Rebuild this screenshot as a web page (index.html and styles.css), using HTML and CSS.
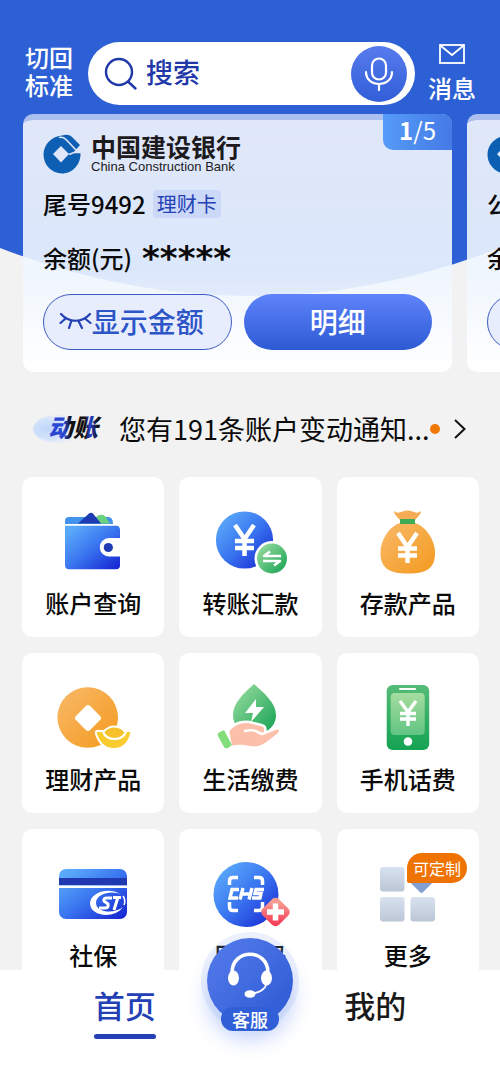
FILE: index.html
```html
<!DOCTYPE html>
<html lang="zh-CN">
<head>
    <meta charset="UTF-8">
    <meta name="viewport" content="width=device-width, initial-scale=1.0">
    <title>中国建设银行</title>
    <link rel="stylesheet" href="styles.css">
</head>
<body>
    <!-- shared gradients and symbols -->
    <svg class="defs" width="0" height="0" aria-hidden="true">
        <defs>
            <linearGradient id="blue" x1="0" y1="0" x2="1" y2="1">
                <stop offset="0.1" stop-color="#5aa9fa"/><stop offset="0.5" stop-color="#3a76f0"/><stop offset="1" stop-color="#1420d0"/>
            </linearGradient>
            <linearGradient id="green" x1="0" y1="0" x2="1" y2="1">
                <stop offset="0" stop-color="#a0e0a4"/><stop offset="1" stop-color="#12a050"/>
            </linearGradient>
            <linearGradient id="phone" x1="0" y1="0" x2="0" y2="1">
                <stop offset="0" stop-color="#55bb77"/><stop offset="1" stop-color="#14a352"/>
            </linearGradient>
            <linearGradient id="screen" x1="0" y1="0" x2="0" y2="1">
                <stop offset="0" stop-color="#a5dd9f"/><stop offset="1" stop-color="#62c482"/>
            </linearGradient>
            <linearGradient id="orange" x1="0" y1="0" x2="1" y2="1">
                <stop offset="0" stop-color="#f9b96a"/><stop offset="1" stop-color="#f39a1d"/>
            </linearGradient>
            <linearGradient id="red" x1="0" y1="0" x2="1" y2="1">
                <stop offset="0.2" stop-color="#f79c93"/><stop offset="0.8" stop-color="#f4455c"/>
            </linearGradient>
            <linearGradient id="grey" x1="0" y1="0" x2="0" y2="1">
                <stop offset="0" stop-color="#d8e1f0"/><stop offset="1" stop-color="#bcc6d6"/>
            </linearGradient>
            <radialGradient id="cloud" cx="0.3" cy="0.5" r="0.7">
                <stop offset="0" stop-color="#bdd8fb"/><stop offset="0.5" stop-color="#d3e3fa"/><stop offset="1" stop-color="#e8effa" stop-opacity="0"/>
            </radialGradient>
            <linearGradient id="ink" x1="0" y1="0" x2="1" y2="0">
                <stop offset="0" stop-color="#2a46d4"/><stop offset="0.3" stop-color="#2a46d4"/><stop offset="0.42" stop-color="#111"/><stop offset="0.68" stop-color="#111"/><stop offset="0.78" stop-color="#2a46d4"/><stop offset="0.92" stop-color="#111"/>
            </linearGradient>
            <symbol id="ccb" viewBox="0 0 38 40">
                <path fill="#0d5fb3" fill-rule="evenodd" d="M19 1.500C23 0 27 1 29 3L37 11L30 19H37.500C38 31 29 39.500 19 39.500C9 39.500 0.500 31 0.500 20.500C0.500 11 8 2.500 19 1.500Z M18 12L10 20L18 28.500L26 20Z"/>
                <path fill="none" stroke="#e0e8f9" stroke-width="1.600" d="M16 3.500Q20 2.500 23 5.500L33 16M26 20.500L31 18.500H38"/>
            </symbol>
        </defs>
    </svg>

    <main class="page">
        <header class="topbar">
            <a href="#" class="switch-mode">切回<br>标准</a>
            <form class="search">
                <label class="search-icon" for="search-input">
                    <svg width="34" height="34" viewBox="0 0 34 34" fill="none" stroke="#2038a8" stroke-width="2.4" stroke-linecap="round">
                        <circle cx="15" cy="15" r="13"/>
                        <path d="M24.5 25L31.500 31.500"/>
                    </svg>
                </label>
                <input type="text" id="search-input" class="search-input" placeholder="搜索" aria-label="搜索">
                <button type="button" class="mic" aria-label="语音搜索">
                    <svg width="30" height="34" viewBox="0 0 30 34" fill="none" stroke="#fff" stroke-width="2.2" stroke-linecap="round">
                        <rect x="8" y="1.500" width="14" height="21" rx="7"/>
                        <path d="M2 15C2 31 28 31 28 15M15 27V33"/>
                    </svg>
                </button>
            </form>
            <a href="#" class="messages">
                <svg width="26" height="20" viewBox="0 0 26 20" fill="none" stroke="#fff" stroke-width="1.800">
                    <rect x="1" y="1" width="24" height="18"/>
                    <path d="M2 2L13 11L24 2"/>
                </svg>
                <span>消息</span>
            </a>
        </header>

        <section class="cards">
            <article class="card">
                <span class="card-count"><b>1</b>/5</span>
                <div class="bank">
                    <svg width="38" height="40"><use href="#ccb"/></svg>
                    <div>
                        <p class="bank-name">中国建设银行</p>
                        <p class="bank-en">China Construction Bank</p>
                    </div>
                </div>
                <div class="account">尾号9492 <span class="tag">理财卡</span></div>
                <div class="balance">余额(元) <span class="stars">*****</span></div>
                <div class="card-actions">
                    <button type="button" class="btn btn-outline">
                        <svg width="33" height="20" viewBox="0 0 33 20" fill="none" stroke="#2442b5" stroke-width="2.200" stroke-linecap="round">
                            <path d="M2 3C10 12 23 12 31 3M6 8L1.500 12M12 11L10 17M20 11L23 17M26.500 8L31.500 12"/>
                        </svg>
                        显示金额
                    </button>
                    <button type="button" class="btn btn-primary">明细</button>
                </div>
            </article>
            <article class="card">
                <div class="bank">
                    <svg width="38" height="40"><use href="#ccb"/></svg>
                </div>
                <div class="account">公积金</div>
                <div class="balance">余额(元)</div>
                <div class="card-actions">
                    <button type="button" class="btn btn-outline" aria-label="显示金额"></button>
                    <button type="button" class="btn btn-primary" aria-label="明细"></button>
                </div>
            </article>
        </section>

        <a href="#" class="notice">
            <svg class="notice-logo" width="70" height="32" viewBox="0 0 70 32">
                <ellipse cx="26" cy="16" rx="25" ry="14" fill="url(#cloud)"/>
                <text x="16" y="24" class="notice-mark" fill="url(#ink)">动账</text>
            </svg>
            <span class="notice-text">您有191条账户变动通知...</span>
            <span class="dot"></span>
            <svg class="chevron" width="12" height="22" viewBox="0 0 12 22" fill="none" stroke="#111" stroke-width="2">
                <path d="M1 2L10.500 11L1 20"/>
            </svg>
        </a>

        <nav class="grid">
            <a href="#" class="tile">
                <svg width="80" height="72" viewBox="0 0 80 72">
                    <path d="M12 18V15Q12 11 16 11H55Q60 11 60 18Z" fill="#4193ec"/>
                    <path d="M43 11Q48 7 52 10L57 17.500H47Z" fill="#69d07f"/>
                    <path d="M25 17.500L36 7.500Q38 6 40 7.500L48 17.500Z" fill="#1f3bb3"/>
                    <path d="M12 19.700H63Q67 19.700 67 24V32H56A9.200 9.200 0 0 0 56 50.500H67V59Q67 63.300 63 63.300H16Q12 63.300 12 59Z" fill="url(#blue)"/>
                    <circle cx="55.300" cy="41.500" r="4.600" fill="#1f3bb3"/>
                </svg>
                <span>账户查询</span>
            </a>
            <a href="#" class="tile">
                <svg width="80" height="72" viewBox="0 0 80 72">
                    <circle cx="34.500" cy="34" r="28.600" fill="url(#blue)"/>
                    <path d="M25 19L34.500 33L44 19M34.500 33V50M25 35H44M25 42H44" fill="none" stroke="#fff" stroke-width="4.500"/>
                    <circle cx="62" cy="52.500" r="17.500" fill="#fff"/>
                    <circle cx="62" cy="52.500" r="15" fill="url(#green)"/>
                    <path d="M71 50H54L60 45.500M53 55H70L64 59.500" fill="none" stroke="#fff" stroke-width="2.600" stroke-linejoin="round"/>
                </svg>
                <span>转账汇款</span>
            </a>
            <a href="#" class="tile">
                <svg width="80" height="72" viewBox="0 0 80 72">
                    <path d="M26 5Q29 8 33 6Q40 3 46 6Q50 8 53 5Q54 7 47 14H32Q25 7 26 5Z" fill="#f6ac54"/>
                    <path d="M32 17H47C57 20 67 33 67 47C67 62 59 67.500 40 67.500C21 67.500 12.500 62 12.500 47C12.500 33 22 20 32 17Z" fill="url(#orange)"/>
                    <rect x="32" y="13" width="15" height="5" fill="#3eac55"/>
                    <path d="M30 27L39.500 41L49 27M39.500 41V57M30 42.500H49M30 49.500H49" fill="none" stroke="#fff" stroke-width="4.500"/>
                </svg>
                <span>存款产品</span>
            </a>
            <a href="#" class="tile">
                <svg width="80" height="72" viewBox="0 0 80 72">
                    <circle cx="34.700" cy="35.500" r="30.300" fill="url(#orange)"/>
                    <rect x="25" y="26" width="20" height="20" rx="3" transform="rotate(45 35 36)" fill="#fff"/>
                    <path d="M43 52Q42 48 46 49H51Q61 40 71 49H75Q79 48 78 52Q74 67 61 67Q48 67 43 52Z" fill="#f8cc2e" stroke="#fff" stroke-width="2"/>
                    <path d="M50 50Q53 57 61.500 57Q70 57 73 50" fill="none" stroke="#fff" stroke-width="2"/>
                    <ellipse cx="61.500" cy="50.500" rx="9" ry="4.500" fill="#f5c02b"/>
                </svg>
                <span>理财产品</span>
            </a>
            <a href="#" class="tile">
                <svg width="80" height="72" viewBox="0 0 80 72">
                    <path d="M44 2C54 11 66 21 66 33C66 45 56 52 44 52C31 52 23 44 23 33C23 21 34 11 44 2Z" fill="url(#green)"/>
                    <path d="M46 17L35 31H43L41 40L54 25H46Z" fill="#fff"/>
                    <path d="M18 49C25 40 35 38 43 41C53 43 57 43 55 51L67 46C72 46 71 51 66 54C57 62 49 68 38 65C31 63 26 64 21 65Z" fill="#fcbfaa" stroke="#fff" stroke-width="2.500"/>
                    <path d="M35 49Q45 47 49 51Q55 53 55 50" fill="none" stroke="#fff" stroke-width="2.500" stroke-linecap="round"/>
                    <path d="M8 54Q7 51 10 50L14 48L22 63L18 66Q15 67 14 65Z" fill="#83dd7a"/>
                </svg>
                <span>生活缴费</span>
            </a>
            <a href="#" class="tile">
                <svg width="80" height="72" viewBox="0 0 80 72">
                    <rect x="18.700" y="3" width="42.500" height="65" rx="6" fill="url(#phone)"/>
                    <rect x="31" y="6" width="17" height="2" rx="1" fill="#fff"/>
                    <rect x="22.700" y="11" width="34" height="42" rx="4" fill="url(#screen)"/>
                    <path d="M32 19L40 30L48 19M40 30V44M32 31.500H48M32 37H48" fill="none" stroke="#fff" stroke-width="3.400"/>
                    <circle cx="40" cy="59.500" r="4.300" fill="#fff"/>
                </svg>
                <span>手机话费</span>
            </a>
            <a href="#" class="tile">
                <svg width="80" height="72" viewBox="0 0 80 72">
                    <rect x="6" y="11" width="68" height="50" rx="7" fill="url(#blue)"/>
                    <rect x="6" y="20" width="68" height="7" fill="#2038b0"/>
                    <rect x="6" y="27.500" width="68" height="2.500" fill="#fff"/>
                    <path d="M68 37C59 29 38 33 37 45C37 59 62 61 70 49C62 56 43 55 43 45C43 35 61 32 68 37Z" fill="#fff"/>
                    <path d="M70 38Q73 42 71 47" fill="none" stroke="#fff" stroke-width="1.500"/>
                    <path d="M59 40H54Q50 40 51 43L55 46Q56 50 52 50H46M60 39.500H68M65 39L61 52" fill="none" stroke="#fff" stroke-width="3"/>
                </svg>
                <span>社保</span>
            </a>
            <a href="#" class="tile">
                <svg width="80" height="72" viewBox="0 0 80 72">
                    <circle cx="36" cy="36.500" r="32.500" fill="url(#blue)"/>
                    <path d="M19.500 27V23Q19.500 19.500 23 19.500H28M44 19.500H49Q52.500 19.500 52.500 23V27M19.500 44V49Q19.500 52.500 23 52.500H28M44 52.500H49Q52.500 52.500 52.500 49V44" fill="none" stroke="#fff" stroke-width="3.500"/>
                    <path d="M29 31.500H22L20 40H28M33 30L30 41.500M42 30L39 41.500M32 36H41M54 31.500H46L45 35.500H51L50 40H42" fill="none" stroke="#fff" stroke-width="3.400"/>
                    <rect x="54" y="42.500" width="23" height="23" rx="5" transform="rotate(45 65.500 54)" fill="url(#red)"/>
                    <path d="M65.500 45.500V62.500M57 54H74" stroke="#fff" stroke-width="5.500"/>
                </svg>
                <span>医保码</span>
            </a>
            <a href="#" class="tile">
                <svg width="80" height="72" viewBox="0 0 80 72">
                    <rect x="12" y="9" width="24.500" height="24.500" rx="3" fill="url(#grey)"/>
                    <rect x="12" y="39" width="24.500" height="24.500" rx="3" fill="url(#grey)"/>
                    <rect x="42.500" y="39" width="24.500" height="24.500" rx="3" fill="url(#grey)"/>
                    <rect x="43.500" y="11.500" width="20" height="20" rx="2" transform="rotate(45 53.500 21.500)" fill="#829fd2"/>
                </svg>
                <em class="badge">可定制</em>
                <span>更多</span>
            </a>
        </nav>
    </main>

    <nav class="tabbar">
        <a href="#" class="tab active">首页</a>
        <a href="#" class="service">
            <svg width="48" height="48" viewBox="0 0 48 48">
                <path d="M6 25V22C6 -3 42 -3 42 22V25" fill="none" stroke="#fff" stroke-width="3.600"/>
                <ellipse cx="7.500" cy="27" rx="5.500" ry="7.500" fill="#fff"/>
                <ellipse cx="40.500" cy="27" rx="5.500" ry="7.500" fill="#fff"/>
                <path d="M41 32Q38 41 27 42.500" fill="none" stroke="#fff" stroke-width="1.800"/>
                <ellipse cx="24" cy="43" rx="5.500" ry="3.800" fill="#fff"/>
            </svg>
            <span>客服</span>
        </a>
        <a href="#" class="tab">我的</a>
    </nav>
</body>
</html>
```
FILE: styles.css
```css
* {
    margin: 0;
    padding: 0;
    box-sizing: border-box;
}

body {
    background-color: #f2f2f2;
    color: #0a0a0a;
    font-family: 'Noto Sans CJK SC', sans-serif;
    font-weight: 500;
    min-height: 100vh;
}

a {
    color: inherit;
    text-decoration: none;
}

button,
input {
    font: inherit;
    border: none;
}

button {
    cursor: pointer;
}

.defs {
    position: absolute;
}

/* blue backdrop with a curved lower edge */
.page {
    padding: 42px 0 80px;
    background: url("data:image/svg+xml,%3Csvg xmlns='http://www.w3.org/2000/svg' viewBox='0 0 500 296' preserveAspectRatio='none'%3E%3Cpath d='M0 0H500V248Q250 344 0 248Z' fill='%232e60d5'/%3E%3C/svg%3E") top / 100% 296px no-repeat;
}

/* Top bar */
.topbar {
    display: flex;
    align-items: center;
    padding: 0 24px 0 25px;
    color: #fff;
    font-size: 24px;
    line-height: 28px;
}

.switch-mode {
    width: 48px;
    margin-right: 15px;
    padding-bottom: 5px;
}

.search {
    flex: 1;
    min-width: 0;
    height: 63px;
    display: flex;
    align-items: center;
    padding: 0 8px 0 16px;
    border-radius: 32px;
    background-color: #fff;
}

.search-icon {
    display: flex;
}

.search-input {
    flex: 1;
    min-width: 0;
    margin-left: 8px;
    padding-bottom: 4px;
    font-size: 27px;
    color: #2038a8;
    background: none;
    outline: none;
}

.search-input::placeholder {
    color: #2038a8;
}

.mic {
    width: 56px;
    height: 56px;
    display: flex;
    align-items: center;
    justify-content: center;
    border-radius: 50%;
    background: linear-gradient(#577bed, #315ed8);
}

.messages {
    width: 48px;
    margin-left: 13px;
    padding-bottom: 2px;
    display: flex;
    flex-direction: column;
    align-items: center;
    gap: 10px;
}

/* Account cards */
.cards {
    display: flex;
    gap: 15px;
    margin-top: 9px;
    padding-left: 23px;
    overflow: hidden;
}

.card {
    position: relative;
    flex: 0 0 calc(100% - 48px);
    padding: 14px 20px 22px;
    border-top: 6px solid rgba(255, 255, 255, 0.6);
    border-radius: 10px;
    background: linear-gradient(rgba(255, 255, 255, 0.85), rgba(239, 246, 255, 0.9) 60%, rgba(255, 255, 255, 0.96)) padding-box;
}

.card-count {
    position: absolute;
    top: -6px;
    right: 0;
    width: 69px;
    height: 36px;
    border-radius: 0 10px 0 10px;
    background: linear-gradient(90deg, #559bf8, #457ae6);
    color: #fff;
    font-size: 24px;
    line-height: 31px;
    font-weight: 400;
    text-align: center;
}

.bank {
    display: flex;
    gap: 10px;
    height: 40px;
    color: #1c1a1c;
}

.bank-name {
    font-size: 25px;
    font-weight: 700;
    line-height: 25px;
}

.bank-en {
    font-family: 'Liberation Sans', sans-serif;
    font-size: 13px;
    font-weight: 400;
    line-height: 16px;
}

.account,
.balance {
    display: flex;
    align-items: center;
    font-size: 24px;
    line-height: 28px;
}

.account {
    margin-top: 16px;
    gap: 7px;
}

.tag {
    padding: 0 4px;
    border-radius: 4px;
    background-color: #cbd8f8;
    color: #2441b5;
    font-size: 20px;
    font-weight: 400;
}

.balance {
    margin-top: 26px;
    gap: 10px;
}

.stars {
    height: 28px;
    font-family: 'DejaVu Sans', sans-serif;
    font-size: 34px;
    font-weight: 700;
}

.card-actions {
    display: grid;
    grid-template-columns: 1fr 1fr;
    gap: 12px;
    margin-top: 22px;
}

.btn {
    display: flex;
    align-items: center;
    justify-content: center;
    height: 56px;
    padding-bottom: 2px;
    border-radius: 28px;
    font-size: 28px;
    white-space: nowrap;
}

.btn-outline {
    padding-right: 12px;
    border: 1px solid #3d5bc4;
    background-color: #e8edfd;
    color: #2c55c8;
}

.btn-primary {
    background: linear-gradient(#5f83fb, #2c5ad3);
    color: #fff;
}

/* Notice */
.notice {
    display: flex;
    align-items: center;
    height: 105px;
    padding: 8px 34px 0 32px;
    font-size: 27px;
    font-weight: 400;
}

.notice-mark {
    font-size: 25px;
    font-weight: 900;
    font-style: italic;
}

.notice-text {
    margin-left: 17px;
    white-space: nowrap;
}

.dot {
    width: 10px;
    height: 10px;
    margin-left: auto;
    border-radius: 50%;
    background-color: #f07800;
}

.chevron {
    margin-left: 14px;
}

/* Shortcuts */
.grid {
    display: grid;
    grid-template-columns: repeat(3, 1fr);
    gap: 16px 15px;
    padding: 0 21px 0 22px;
}

.tile {
    position: relative;
    display: flex;
    flex-direction: column;
    align-items: center;
    gap: 8px;
    padding: 29px 0 18px;
    border-radius: 10px;
    background-color: #fff;
    font-size: 24px;
    line-height: 33px;
}

.badge {
    position: absolute;
    top: 24px;
    right: 12px;
    padding: 0 6px;
    border-radius: 15px 15px 15px 2px;
    background-color: #ef7300;
    color: #fff;
    font-size: 16px;
    font-style: normal;
    font-weight: 400;
    line-height: 30px;
}

/* Bottom bar */
.tabbar {
    position: fixed;
    right: 0;
    bottom: 0;
    left: 0;
    display: grid;
    grid-template-columns: repeat(3, 1fr);
    justify-items: center;
    align-items: start;
    height: 99px;
    padding: 0 62px;
    background-color: #fff;
}

.tab {
    margin-top: 10px;
    padding-bottom: 5px;
    color: #1a1a1a;
    font-size: 31px;
    line-height: 50px;
}

.tab.active {
    color: #2340b4;
}

.tab.active::after {
    content: '';
    display: block;
    height: 5px;
    margin-top: 4px;
    border-radius: 3px;
    background-color: #2340b4;
}

.service {
    display: flex;
    flex-direction: column;
    align-items: center;
    width: 86px;
    height: 86px;
    margin-top: -32px;
    padding-top: 13px;
    border-radius: 50%;
    background: linear-gradient(135deg, #567cec, #2b59d2);
    box-shadow: 0 0 0 6px rgba(150, 180, 245, 0.18), 0 16px 20px rgba(60, 110, 240, 0.3);
    color: #fff;
}

.service svg {
    flex: none;
}

.service span {
    margin-top: 8px;
    padding: 0 11px;
    border-radius: 12px;
    background-color: #315fd8;
    font-size: 18px;
    line-height: 24px;
}
```
